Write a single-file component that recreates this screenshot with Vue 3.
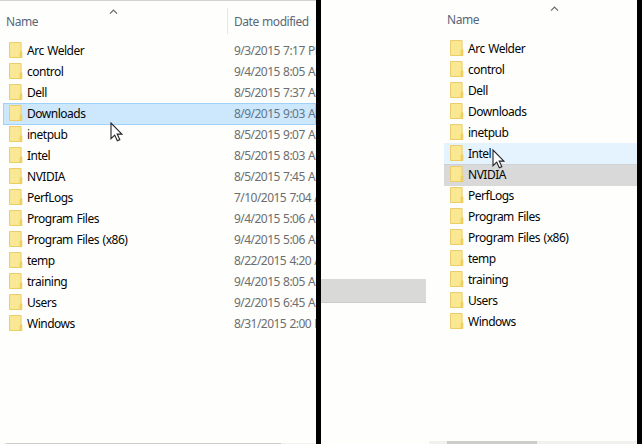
<script setup>
const files = [
  { name: 'Arc Welder', date: '9/3/2015 7:17 PM' },
  { name: 'control', date: '9/4/2015 8:05 AM' },
  { name: 'Dell', date: '8/5/2015 7:37 AM' },
  { name: 'Downloads', date: '8/9/2015 9:03 AM' },
  { name: 'inetpub', date: '8/5/2015 9:07 AM' },
  { name: 'Intel', date: '8/5/2015 8:03 AM' },
  { name: 'NVIDIA', date: '8/5/2015 7:45 AM' },
  { name: 'PerfLogs', date: '7/10/2015 7:04 AM' },
  { name: 'Program Files', date: '9/4/2015 5:06 AM' },
  { name: 'Program Files (x86)', date: '9/4/2015 5:06 AM' },
  { name: 'temp', date: '8/22/2015 4:20 AM' },
  { name: 'training', date: '9/4/2015 8:05 AM' },
  { name: 'Users', date: '9/2/2015 6:45 AM' },
  { name: 'Windows', date: '8/31/2015 2:00 PM' },
]
const panes = [
  { id: 'left', dates: true, states: { Downloads: 'selected' } },
  { id: 'right', dates: false, states: { Intel: 'hover', NVIDIA: 'inactive' } },
]
</script>

<template>
  <main class="screen">
    <section v-for="pane in panes" :key="pane.id" class="pane" :class="pane.id">
      <aside v-if="pane.id === 'right'" class="tree"><div class="tree-item"></div></aside>
      <div class="listing">
        <header class="head">
          <span class="name-head">Name</span>
          <span v-if="pane.dates" class="date-head">Date modified</span>
          <svg class="sort" width="9" height="6" viewBox="0 0 9 6"><path d="M1 4.7 4.5 1.2 8 4.7" fill="none" stroke="#66696b" stroke-width="1.2" /></svg>
        </header>
        <div v-for="file in files" :key="file.name" class="row" :class="pane.states[file.name]">
          <svg class="folder" width="14" height="17" viewBox="0 0 14 17">
            <path d="M.5.5h11.6v15H.5z" fill="#fae792" stroke="#ebcd70" />
            <path d="M3.5 2v12M7.5 2v12" stroke="#fbe99a" />
            <path d="M11.2 15.6v-5l.8-.8h.8v5.8z" fill="#fbe282" stroke="#e9c954" />
            <path d="M1 15.5h12" stroke="#eace61" />
          </svg>
          <span class="name">{{ file.name }}</span>
          <span v-if="pane.dates" class="date">{{ file.date }}</span>
        </div>
        <div class="scroll"><div class="thumb"></div></div>
      </div>
      <svg class="cursor" width="13" height="20" viewBox="0 0 13 20"><path d="M1 1v15.6l3.7-3.5 2.6 5.6 2.5-1.1-2.6-5.5h4.7z" fill="#fff" stroke="#222226" stroke-width="1.1" /></svg>
    </section>
  </main>
</template>

<style>
body { margin: 0; background: #000; }
</style>

<style scoped>
.screen { display: flex; gap: 5px; width: 642px; height: 444px; overflow: hidden; background: #000; font: 12px/21px "Noto Sans", "Open Sans", sans-serif; color: #050505; }
.pane { position: relative; display: flex; width: 316px; height: 444px; overflow: hidden; background: #fefffc; }
.tree { width: 105px; margin-right: 18px; padding-top: 279px; flex: none; }
.tree-item { height: 23px; background: #d9dad7; border-bottom: 1px solid #cbccca; }
.listing { display: flex; flex-direction: column; flex: 1; min-width: 0; position: relative; }
.left .listing { padding-left: 3px; border-top: 1px solid #d2d3d0; }
.head { display: flex; flex: none; position: relative; box-sizing: border-box; color: #56657b; }
.left .head { height: 39px; padding: 10px 0 0 3px; }
.right .head { height: 38px; padding: 9px 0 0 3px; }
.name-head { width: 221px; letter-spacing: -.4px; }
.date-head { box-sizing: border-box; height: 26px; margin-top: -3px; padding: 3px 0 0 6px; border-left: 1px solid #e5e6e7; white-space: nowrap; color: #5c6775; letter-spacing: -.48px; word-spacing: .8px; }
.sort { position: absolute; left: 106px; top: 8px; }
.right .sort { top: 6px; }
.row { display: flex; align-items: flex-start; box-sizing: border-box; height: 22px; margin-bottom: -1px; flex: none; padding-left: 6px; white-space: nowrap; }
.folder { margin: 2px 4px 0 0; flex: none; }
.name { width: 207px; flex: none; letter-spacing: -.49px; word-spacing: 1px; }
.date { color: #6d6d70; letter-spacing: -.53px; word-spacing: .6px; }
.selected { background: #cde8fd; box-shadow: inset 0 0 0 1px #9fd1fb; }
.selected .date { color: #60758b; }
.hover { background: #e5f3fe; }
.inactive { background: #d9d9d9; box-shadow: inset 0 1px #cfd1d2; }
.scroll { margin-top: auto; flex: none; background: #f1f1f0; }
.left .scroll { height: 1px; }
.right .scroll { height: 3px; margin-left: -15px; }
.thumb { height: 100%; background: #cdcdcb; }
.left .thumb { width: 275px; margin-left: 3px; }
.right .thumb { width: 90px; margin-left: 18px; }
.cursor { position: absolute; left: 110px; top: 122px; }
.right .cursor { left: 171px; top: 149px; }
</style>
